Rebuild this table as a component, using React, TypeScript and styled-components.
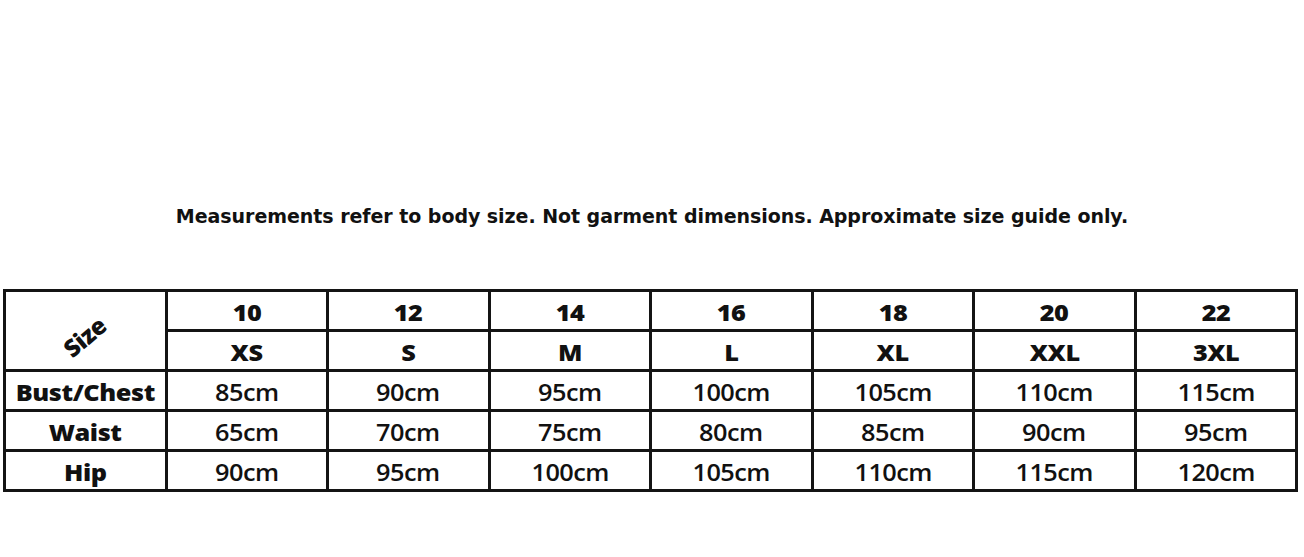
import React from "react";
import styled, { createGlobalStyle } from "styled-components";

const GlobalStyle = createGlobalStyle`
  html, body {
    margin: 0;
    padding: 0;
    background: #fff;
  }
`;

const Page = styled.div`
  width: 1304px;
  height: 557px;
  padding-top: 205px;
  box-sizing: border-box;
  background: #fff;
`;

const Note = styled.p`
  margin: 0;
  text-align: center;
  font-family: "DejaVu Sans", sans-serif;
  font-weight: 700;
  font-size: 19px;
  line-height: 22px;
  color: #111;
  letter-spacing: -0.05px;
`;

const TableWrap = styled.div`
  padding: 62px 0 0 3px;
`;

const Chart = styled.table`
  width: 1295px;
  table-layout: fixed;
  border-collapse: collapse;
  font-family: "Open Sans", Lato, sans-serif;
  color: #111;
`;

const Row = styled.tr`
  height: 40px;
`;

const Cell = styled.td<{ $bold?: boolean }>`
  border: 3px solid #141414;
  padding: 3px 0 0;
  text-align: center;
  vertical-align: middle;
  font-size: 23px;
  font-weight: ${(p) => (p.$bold ? 800 : 600)};
  line-height: 28px;
  letter-spacing: ${(p) => (p.$bold ? "-0.4px" : "-0.5px")};
  white-space: nowrap;
`;

const Stretch = styled.span`
  display: inline-block;
  transform: scaleX(1.1);
`;

const Corner = styled.td`
  border: 3px solid #141414;
  padding: 0;
  text-align: center;
  vertical-align: middle;
`;

const Rotated = styled.span`
  display: inline-block;
  transform: translate(-1px, 6px) rotate(-40deg);
  font-size: 24px;
  font-weight: 800;
  letter-spacing: -0.5px;
`;

const sizes = ["10", "12", "14", "16", "18", "20", "22"];
const labels = ["XS", "S", "M", "L", "XL", "XXL", "3XL"];

const measures: { name: string; values: number[] }[] = [
  { name: "Bust/Chest", values: [85, 90, 95, 100, 105, 110, 115] },
  { name: "Waist", values: [65, 70, 75, 80, 85, 90, 95] },
  { name: "Hip", values: [90, 95, 100, 105, 110, 115, 120] },
];

export default function App() {
  return (
    <Page>
      <GlobalStyle />
      <Note>
        Measurements refer to body size. Not garment dimensions. Approximate size guide only.
      </Note>
      <TableWrap>
        <Chart>
          <tbody>
            <Row>
              <Corner rowSpan={2}>
                <Rotated>Size</Rotated>
              </Corner>
              {sizes.map((s) => (
                <Cell key={s} $bold>
                  <Stretch>{s}</Stretch>
                </Cell>
              ))}
            </Row>
            <Row>
              {labels.map((l) => (
                <Cell key={l} $bold>
                  <Stretch>{l}</Stretch>
                </Cell>
              ))}
            </Row>
            {measures.map((m) => (
              <Row key={m.name}>
                <Cell $bold>
                  <Stretch>{m.name}</Stretch>
                </Cell>
                {m.values.map((v, i) => (
                  <Cell key={i}>
                    <Stretch>{v}cm</Stretch>
                  </Cell>
                ))}
              </Row>
            ))}
          </tbody>
        </Chart>
      </TableWrap>
    </Page>
  );
}
